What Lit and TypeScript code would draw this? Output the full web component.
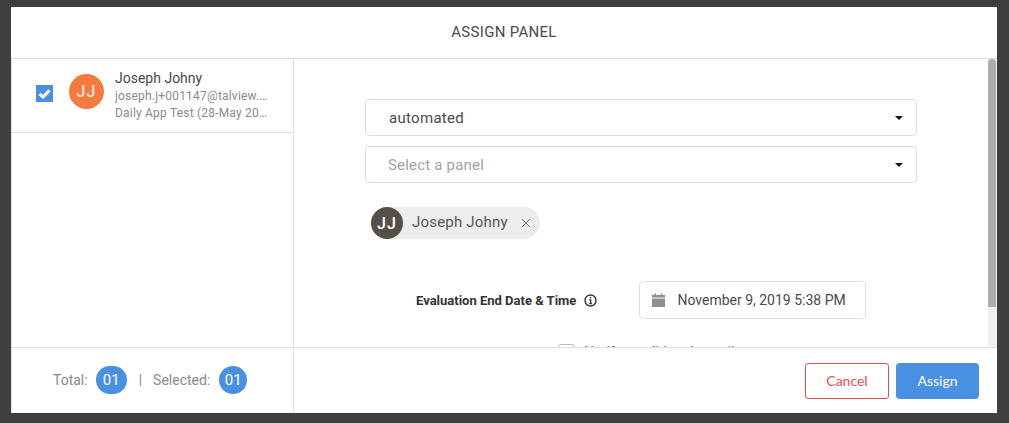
import { LitElement, html, css } from "lit";
import { customElement } from "lit/decorators.js";

@customElement("app-root")
export class AppRoot extends LitElement {
  static styles = css`
    :host { display: block; width: 1009px; height: 423px; background: #3f3f3f; font-family: Roboto, sans-serif; overflow: hidden; padding: 7px 12px 10px 11px; box-sizing: border-box; }
    .modal { background: #fff; height: 406px; display: flex; flex-direction: column; box-sizing: border-box; }
    .title { height: 52px; flex: none; display: flex; align-items: center; justify-content: center; font-size: 15px; letter-spacing: 0.3px; color: #4a4a4a; border-bottom: 1px solid #e0e0e0; box-sizing: border-box; padding-bottom: 1px; }
    .body { flex: 1; min-height: 0; display: flex; }
    .left { width: 283px; flex: none; box-sizing: border-box; border-left: 1px solid #e0e0e0; border-right: 1px solid #e0e0e0; }
    .cand { height: 74px; box-sizing: border-box; border-bottom: 1px solid #e0e0e0; display: flex; align-items: flex-start; }
    .check { width: 17px; height: 17px; background: #4a90e2; margin: 26px 0 0 24px; flex: none; display: flex; }
    .avatar { width: 35px; height: 35px; border-radius: 50%; background: #f47b3e; color: #fde8dc; font-size: 16px; font-weight: 500; letter-spacing: 1px; display: flex; align-items: center; justify-content: center; margin: 15px 0 0 16px; flex: none; }
    .info { margin: 10px 0 0 11px; width: 154px; }
    .name { font-size: 14px; line-height: 18px; color: #4a4a4a; margin-bottom: 1px; }
    .sub { font-size: 12px; line-height: 17px; color: #8a8a8a; white-space: nowrap; overflow: hidden; text-overflow: ellipsis; letter-spacing: 0.2px; }
    .right { flex: 1; min-width: 0; position: relative; overflow: hidden; display: flex; }
    .content { flex: 1; min-width: 0; padding: 40px 0 0 71px; box-sizing: border-box; }
    .scrollbar { width: 9px; flex: none; background: #f1f1f1; }
    .thumb { height: 248px; width: 8px; background: #adadad; border-radius: 4px 4px 0 0; }
    .select { width: 552px; height: 37px; box-sizing: border-box; border: 1px solid #dedede; border-radius: 4px; display: flex; align-items: center; justify-content: space-between; padding: 0 13px 0 23px; font-size: 15px; color: #4a4a4a; margin-bottom: 10px; letter-spacing: 0.3px; }
    .select.ph { color: #a3a3a3; padding-left: 22px; letter-spacing: 0.2px; }
    .caret { width: 0; height: 0; border-left: 4px solid transparent; border-right: 4px solid transparent; border-top: 4px solid #111; }
    .chip { display: inline-flex; align-items: center; height: 32px; background: #ededed; border-radius: 16px; margin: 14px 0 0 6px; padding-right: 9px; font-size: 15px; color: #555; letter-spacing: 0.2px; }
    .chip .av { width: 32px; height: 32px; border-radius: 50%; background: #554f48; color: #fff; font-size: 16px; font-weight: 500; letter-spacing: 1px; display: flex; align-items: center; justify-content: center; }
    .chip span { margin: 0 13px 2px 9px; }
    .chip svg { display: block; }
    .dateRow { display: flex; align-items: center; margin: 42px 0 0 51px; }
    .label { font-size: 13px; font-weight: 700; color: #333; padding-top: 1px; }
    .info-i { margin-left: 8px; display: block; flex: none; }
    .date { margin-left: 42px; width: 227px; height: 38px; box-sizing: border-box; border: 1px solid #dedede; border-radius: 4px; display: flex; align-items: center; padding-left: 12px; font-size: 14px; color: #4a4a4a; gap: 12px; flex: none; }
    .notify { display: flex; align-items: flex-start; gap: 9px; margin: 25px 0 0 193px; font-size: 14px; line-height: 16px; color: #666; white-space: nowrap; }
    .box { width: 17px; height: 17px; box-sizing: border-box; border: 1px solid #bbb; border-radius: 3px; flex: none; }
    .foot { height: 66px; flex: none; display: flex; border-top: 1px solid #e0e0e0; box-sizing: border-box; }
    .totals { width: 283px; flex: none; box-sizing: border-box; border-left: 1px solid #e0e0e0; border-right: 1px solid #e0e0e0; display: flex; align-items: center; padding-left: 41px; font-size: 14px; color: #8a8a8a; padding-bottom: 1px; }
    .pill { background: #4a90e2; color: #fff; height: 28px; border-radius: 14px; display: flex; align-items: center; justify-content: center; font-size: 15px; }
    .pill.a { width: 31px; margin-left: 8px; }
    .pill.b { width: 28px; margin-left: 9px; }
    .sep { margin: 0 11px 0 12px; }
    .actions { flex: 1; display: flex; justify-content: flex-end; align-items: center; gap: 7px; padding-right: 18px; font-family: Lato, sans-serif; font-size: 14px; }
    .btn { width: 84px; height: 36px; box-sizing: border-box; border-radius: 3px; display: flex; align-items: center; justify-content: center; }
    .cancel { border: 1px solid #e0524d; color: #e0524d; }
    .assign { width: 83px; background: #4a90e2; color: #fff; border-radius: 4px; }
  `;

  render() {
    return html`<div class="modal">
      <div class="title">ASSIGN PANEL</div>
      <div class="body">
        <div class="left">
          <div class="cand">
            <div class="check"><svg width="17" height="17" viewBox="0 0 17 17"><path d="M3.5 8.8l3.5 3.2 6.5-6.6" fill="none" stroke="#fff" stroke-width="3"/></svg></div>
            <div class="avatar">JJ</div>
            <div class="info">
              <div class="name">Joseph Johny</div>
              <div class="sub">joseph.j+001147@talview.com</div>
              <div class="sub">Daily App Test (28-May 2019)</div>
            </div>
          </div>
        </div>
        <div class="right">
          <div class="content">
            <div class="select"><span>automated</span><i class="caret"></i></div>
            <div class="select ph"><span>Select a panel</span><i class="caret"></i></div>
            <div class="chip"><div class="av">JJ</div><span>Joseph Johny</span>
              <svg width="10" height="10" viewBox="0 0 10 10"><path d="M1 1l8 8M9 1l-8 8" stroke="#666" stroke-width="0.9" fill="none"/></svg></div>
            <div class="dateRow">
              <div class="label">Evaluation End Date &amp; Time</div>
              <svg class="info-i" width="13" height="13" viewBox="0 0 13 13"><circle cx="6.5" cy="6.5" r="5.5" fill="none" stroke="#333" stroke-width="1.4"/><path d="M6.5 3v1.5M5.3 6h1.4v3.6M5.2 9.6h2.7" stroke="#333" stroke-width="1.3" fill="none"/></svg>
              <div class="date">
                <svg width="13" height="14" viewBox="0 0 13 14"><path fill="#8f8f8f" d="M0 5.5h13V14H0zM0 2h2.5V0.5h1.5V2h5V0.5h1.5V2H13v2.5H0z"/></svg>
                <span>November 9, 2019 5:38 PM</span>
              </div>
            </div>
            <div class="notify"><div class="box"></div><span>Notify candidate by mail</span></div>
          </div>
          <div class="scrollbar"><div class="thumb"></div></div>
        </div>
      </div>
      <div class="foot">
        <div class="totals">Total:<div class="pill a">01</div><span class="sep">|</span>Selected:<div class="pill b">01</div></div>
        <div class="actions"><div class="btn cancel">Cancel</div><div class="btn assign">Assign</div></div>
      </div>
    </div>`;
  }
}
